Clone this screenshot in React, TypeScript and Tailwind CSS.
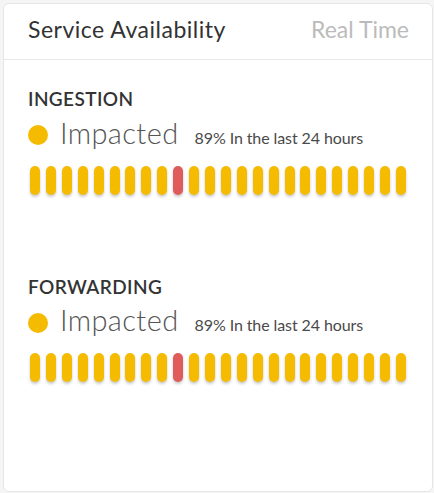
import React from "react";

const Bars = () => (
  <div className="ml-[2px] mt-[15px] flex w-[376px] justify-between">
    {Array.from({ length: 24 }).map((_, i) => (
      <div
        key={i}
        className={
          "h-[29px] w-[10px] rounded-full shadow-[0_2px_3px_rgba(0,0,0,0.22)] " +
          (i === 9 ? "bg-[#e05b5b]" : "bg-[#f5bb00]")
        }
      />
    ))}
  </div>
);

const Section = ({ title, className }: { title: string; className: string }) => (
  <div className={"flex flex-col pl-[24px] " + className}>
    <div className="text-[19px] leading-[1.2] font-semibold tracking-[0.4px] text-[#333]">{title}</div>
    <div className="mt-[5px] flex items-center">
      <div className="mt-[4px] h-[20px] w-[20px] rounded-full bg-[#f5bb00]" />
      <div className="ml-[12px] flex items-baseline">
        <span className="text-[29px] leading-[1.2] font-light tracking-[0.4px] text-[#555]">Impacted</span>
        <span className="ml-[16px] text-[16px] tracking-[-0.1px] text-[#4a4a4a]">89% In the last 24 hours</span>
      </div>
    </div>
    <Bars />
  </div>
);

export default function App() {
  return (
    <div
      className="h-[493px] w-[434px] bg-[#f5f5f5] pl-[3px] pt-[3px]"
      style={{ fontFamily: "Lato, 'Noto Sans', sans-serif" }}
    >
      <div className="flex h-[489px] w-[430px] flex-col rounded-[6px] border border-[#e6e6e6] bg-white">
        <div className="flex h-[56px] items-start justify-between border-b border-[#e8e8e8] pl-[24px] pr-[23px] pt-[12px]">
          <span className="text-[23px] leading-[1.2] tracking-[0.5px] text-[#333]">Service Availability</span>
          <span className="text-[23px] leading-[1.2] text-[#bbb]">Real Time</span>
        </div>
        <Section title="INGESTION" className="mt-[28px]" />
        <Section title="FORWARDING" className="mt-[81px]" />
      </div>
    </div>
  );
}
